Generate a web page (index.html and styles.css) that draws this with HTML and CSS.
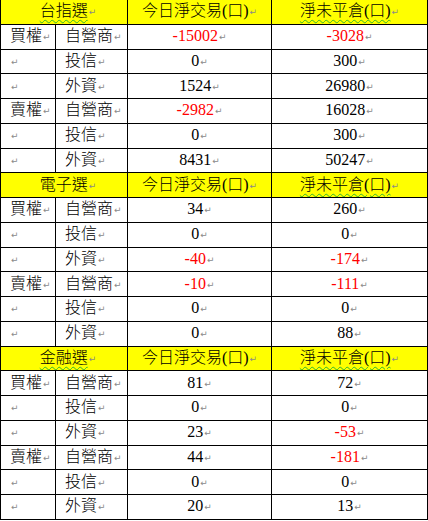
FILE: index.html
```html
<!DOCTYPE html>
<html lang="zh-Hant">
<head>
<meta charset="utf-8">
<title>選擇權三大法人</title>
<link rel="stylesheet" href="styles.css">
</head>
<body>
<table class="opt">
<colgroup><col class="c1"><col class="c2"><col class="c3"><col class="c4"></colgroup>
<tbody>
<tr class="hd first"><td colspan="2" class="sec"><span class="wavy">台指選</span><i class="pm">↵</i></td><td>今日淨交易(口)<i class="pm">↵</i></td><td><span class="wavy">淨未平倉(口)</span><i class="pm">↵</i></td></tr>
<tr><td class="k">買權<i class="pm">↵</i></td><td class="k">自營商<i class="pm">↵</i></td><td class="n neg">-15002<i class="pm">↵</i></td><td class="n neg">-3028<i class="pm">↵</i></td></tr>
<tr><td class="k"><i class="pm">↵</i></td><td class="k">投信<i class="pm">↵</i></td><td class="n">0<i class="pm">↵</i></td><td class="n">300<i class="pm">↵</i></td></tr>
<tr><td class="k"><i class="pm">↵</i></td><td class="k">外資<i class="pm">↵</i></td><td class="n">1524<i class="pm">↵</i></td><td class="n">26980<i class="pm">↵</i></td></tr>
<tr><td class="k">賣權<i class="pm">↵</i></td><td class="k">自營商<i class="pm">↵</i></td><td class="n neg">-2982<i class="pm">↵</i></td><td class="n">16028<i class="pm">↵</i></td></tr>
<tr><td class="k"><i class="pm">↵</i></td><td class="k">投信<i class="pm">↵</i></td><td class="n">0<i class="pm">↵</i></td><td class="n">300<i class="pm">↵</i></td></tr>
<tr><td class="k"><i class="pm">↵</i></td><td class="k">外資<i class="pm">↵</i></td><td class="n">8431<i class="pm">↵</i></td><td class="n">50247<i class="pm">↵</i></td></tr>

<tr class="hd"><td colspan="2" class="sec">電子選<i class="pm">↵</i></td><td>今日淨交易(口)<i class="pm">↵</i></td><td><span class="wavy">淨未平倉(口)</span><i class="pm">↵</i></td></tr>
<tr><td class="k">買權<i class="pm">↵</i></td><td class="k">自營商<i class="pm">↵</i></td><td class="n">34<i class="pm">↵</i></td><td class="n">260<i class="pm">↵</i></td></tr>
<tr><td class="k"><i class="pm">↵</i></td><td class="k">投信<i class="pm">↵</i></td><td class="n">0<i class="pm">↵</i></td><td class="n">0<i class="pm">↵</i></td></tr>
<tr><td class="k"><i class="pm">↵</i></td><td class="k">外資<i class="pm">↵</i></td><td class="n neg">-40<i class="pm">↵</i></td><td class="n neg">-174<i class="pm">↵</i></td></tr>
<tr><td class="k">賣權<i class="pm">↵</i></td><td class="k">自營商<i class="pm">↵</i></td><td class="n neg">-10<i class="pm">↵</i></td><td class="n neg">-111<i class="pm">↵</i></td></tr>
<tr><td class="k"><i class="pm">↵</i></td><td class="k">投信<i class="pm">↵</i></td><td class="n">0<i class="pm">↵</i></td><td class="n">0<i class="pm">↵</i></td></tr>
<tr><td class="k"><i class="pm">↵</i></td><td class="k">外資<i class="pm">↵</i></td><td class="n">0<i class="pm">↵</i></td><td class="n">88<i class="pm">↵</i></td></tr>

<tr class="hd"><td colspan="2" class="sec"><span class="wavy">金融選</span><i class="pm">↵</i></td><td>今日淨交易(口)<i class="pm">↵</i></td><td><span class="wavy">淨未平倉(口)</span><i class="pm">↵</i></td></tr>
<tr><td class="k">買權<i class="pm">↵</i></td><td class="k">自營商<i class="pm">↵</i></td><td class="n">81<i class="pm">↵</i></td><td class="n">72<i class="pm">↵</i></td></tr>
<tr><td class="k"><i class="pm">↵</i></td><td class="k">投信<i class="pm">↵</i></td><td class="n">0<i class="pm">↵</i></td><td class="n">0<i class="pm">↵</i></td></tr>
<tr><td class="k"><i class="pm">↵</i></td><td class="k">外資<i class="pm">↵</i></td><td class="n">23<i class="pm">↵</i></td><td class="n neg">-53<i class="pm">↵</i></td></tr>
<tr><td class="k">賣權<i class="pm">↵</i></td><td class="k">自營商<i class="pm">↵</i></td><td class="n">44<i class="pm">↵</i></td><td class="n neg">-181<i class="pm">↵</i></td></tr>
<tr><td class="k"><i class="pm">↵</i></td><td class="k">投信<i class="pm">↵</i></td><td class="n">0<i class="pm">↵</i></td><td class="n">0<i class="pm">↵</i></td></tr>
<tr><td class="k"><i class="pm">↵</i></td><td class="k">外資<i class="pm">↵</i></td><td class="n">20<i class="pm">↵</i></td><td class="n">13<i class="pm">↵</i></td></tr>
</tbody>
</table>
</body>
</html>
```

FILE: styles.css
```css
html, body {
  margin: 0;
  padding: 0;
  background: #ffffff;
}

.opt {
  border-collapse: collapse;
  table-layout: fixed;
  width: 427px;
  font-family: "Liberation Serif", "Noto Sans CJK TC", serif;
  font-size: 16px;
  font-weight: 300;
  line-height: 18px;
  color: #000;
}

.c1 { width: 55px; }
.c2 { width: 72px; }
.c3 { width: 144px; }
.c4 { width: 156px; }

.opt td {
  border: 1px solid #000;
  height: 23.76px;
  padding: 0;
  vertical-align: middle;
  white-space: nowrap;
  overflow: hidden;
}

.opt tr.first td {
  border-top: none;
}

.hd td {
  background: #ffff00;
  text-align: center;
}

.opt td.sec {
  padding-left: 8px;
}

.opt td.k {
  text-align: left;
  padding-left: 9px;
}

.n {
  text-align: center;
}

.neg {
  color: #ff0000;
}

.wavy {
  text-decoration: underline wavy #2fb52f;
  text-decoration-thickness: 1px;
  text-underline-offset: 3px;
}

.pm {
  font-style: normal;
  font-weight: 400;
  font-family: "DejaVu Sans", sans-serif;
  font-size: 9px;
  color: #8a8a8a;
  margin-left: 1px;
  vertical-align: 1px;
}
```
